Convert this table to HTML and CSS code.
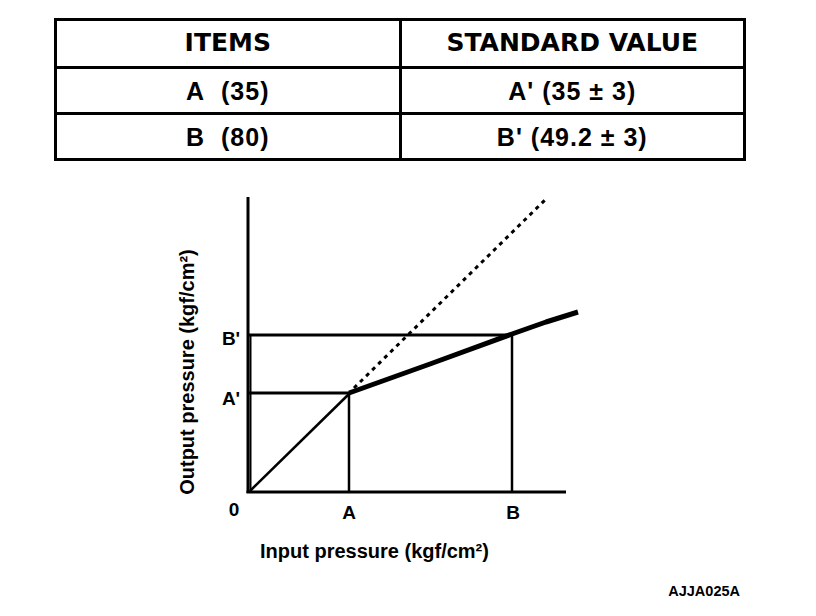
FILE: index.html
```html
<!DOCTYPE html>
<html lang="en">
<head>
<meta charset="utf-8">
<title>Output pressure chart</title>
<link rel="stylesheet" href="styles.css">
</head>
<body>
<main class="page">
  <table class="spec">
    <thead>
      <tr class="head-row"><th>ITEMS</th><th>STANDARD VALUE</th></tr>
    </thead>
    <tbody>
      <tr class="row"><td>A&nbsp; (35)</td><td>A' (35 ± 3)</td></tr>
      <tr class="row"><td>B&nbsp; (80)</td><td>B' (49.2 ± 3)</td></tr>
    </tbody>
  </table>

  <figure class="chart">
    <svg class="chart-svg" width="440" height="390" viewBox="160 180 440 390" xmlns="http://www.w3.org/2000/svg">
      <g class="lines" stroke="#000" fill="none" stroke-linecap="butt">
        <line x1="248" y1="197" x2="248" y2="493" stroke-width="3"/>
        <line x1="250.5" y1="335" x2="250.5" y2="492" stroke-width="2"/>
        <line x1="246.5" y1="492" x2="566" y2="492" stroke-width="3"/>
        <line x1="248" y1="335" x2="513" y2="335" stroke-width="3"/>
        <line x1="248" y1="393" x2="350" y2="393" stroke-width="3"/>
        <line x1="349" y1="393" x2="349" y2="492" stroke-width="2.5"/>
        <line x1="512" y1="335" x2="512" y2="492" stroke-width="2.5"/>
        <line x1="250" y1="491" x2="351" y2="392" stroke-width="2.5"/>
        <polyline points="349,393 430,364 512,334 546,322 578,312" stroke-width="5" stroke-linejoin="round"/>
        <line x1="354" y1="388" x2="547" y2="198" stroke-width="3" stroke-dasharray="4 4.5"/>
      </g>
      <g class="labels">
        <text x="231" y="345" text-anchor="middle">B'</text>
        <text x="231" y="405" text-anchor="middle">A'</text>
        <text x="234" y="516" text-anchor="middle">0</text>
        <text x="349" y="519" text-anchor="middle">A</text>
        <text x="513" y="519" text-anchor="middle">B</text>
        <text class="axis-title" x="260" y="558">Input pressure (kgf/cm²)</text>
        <text class="axis-title" x="194" y="372" text-anchor="middle" transform="rotate(-90 194 372)">Output pressure (kgf/cm²)</text>
      </g>
    </svg>
  </figure>

  <p class="code">AJJA025A</p>
</main>
</body>
</html>
```

FILE: styles.css
```css
* {
  box-sizing: border-box;
}

html, body {
  margin: 0;
  padding: 0;
  background: #fff;
  color: #000;
}

.page {
  width: 816px;
  height: 616px;
  padding: 18px 0 0 54px;
  overflow: hidden;
  display: flex;
  flex-direction: column;
  align-items: flex-start;
}

.spec {
  width: 692px;
  border-collapse: collapse;
  table-layout: fixed;
  font-weight: bold;
  color: #000;
}

.spec th,
.spec td {
  border: 3px solid #000;
  padding: 0;
  text-align: center;
  vertical-align: middle;
  width: 50%;
}

.head-row th {
  height: 48px;
  font-family: "DejaVu Sans", "Liberation Sans", sans-serif;
  font-size: 25px;
  line-height: 28px;
  padding-bottom: 2px;
}

.row td {
  height: 46px;
  font-family: "Liberation Sans", Arial, sans-serif;
  font-size: 25px;
  line-height: 28px;
  letter-spacing: 1px;
}

.chart {
  margin: 19px 0 0 106px;
  padding: 0;
  line-height: 0;
}

.chart-svg {
  display: block;
}

.labels text {
  font-family: "Liberation Sans", Arial, sans-serif;
  font-weight: bold;
  font-size: 19px;
  fill: #000;
}

.labels .axis-title {
  font-size: 20px;
}

.code {
  align-self: flex-end;
  margin: 13px 76px 0 0;
  font-family: "Liberation Sans", Arial, sans-serif;
  font-weight: bold;
  font-size: 14.5px;
  line-height: 16px;
}
```
